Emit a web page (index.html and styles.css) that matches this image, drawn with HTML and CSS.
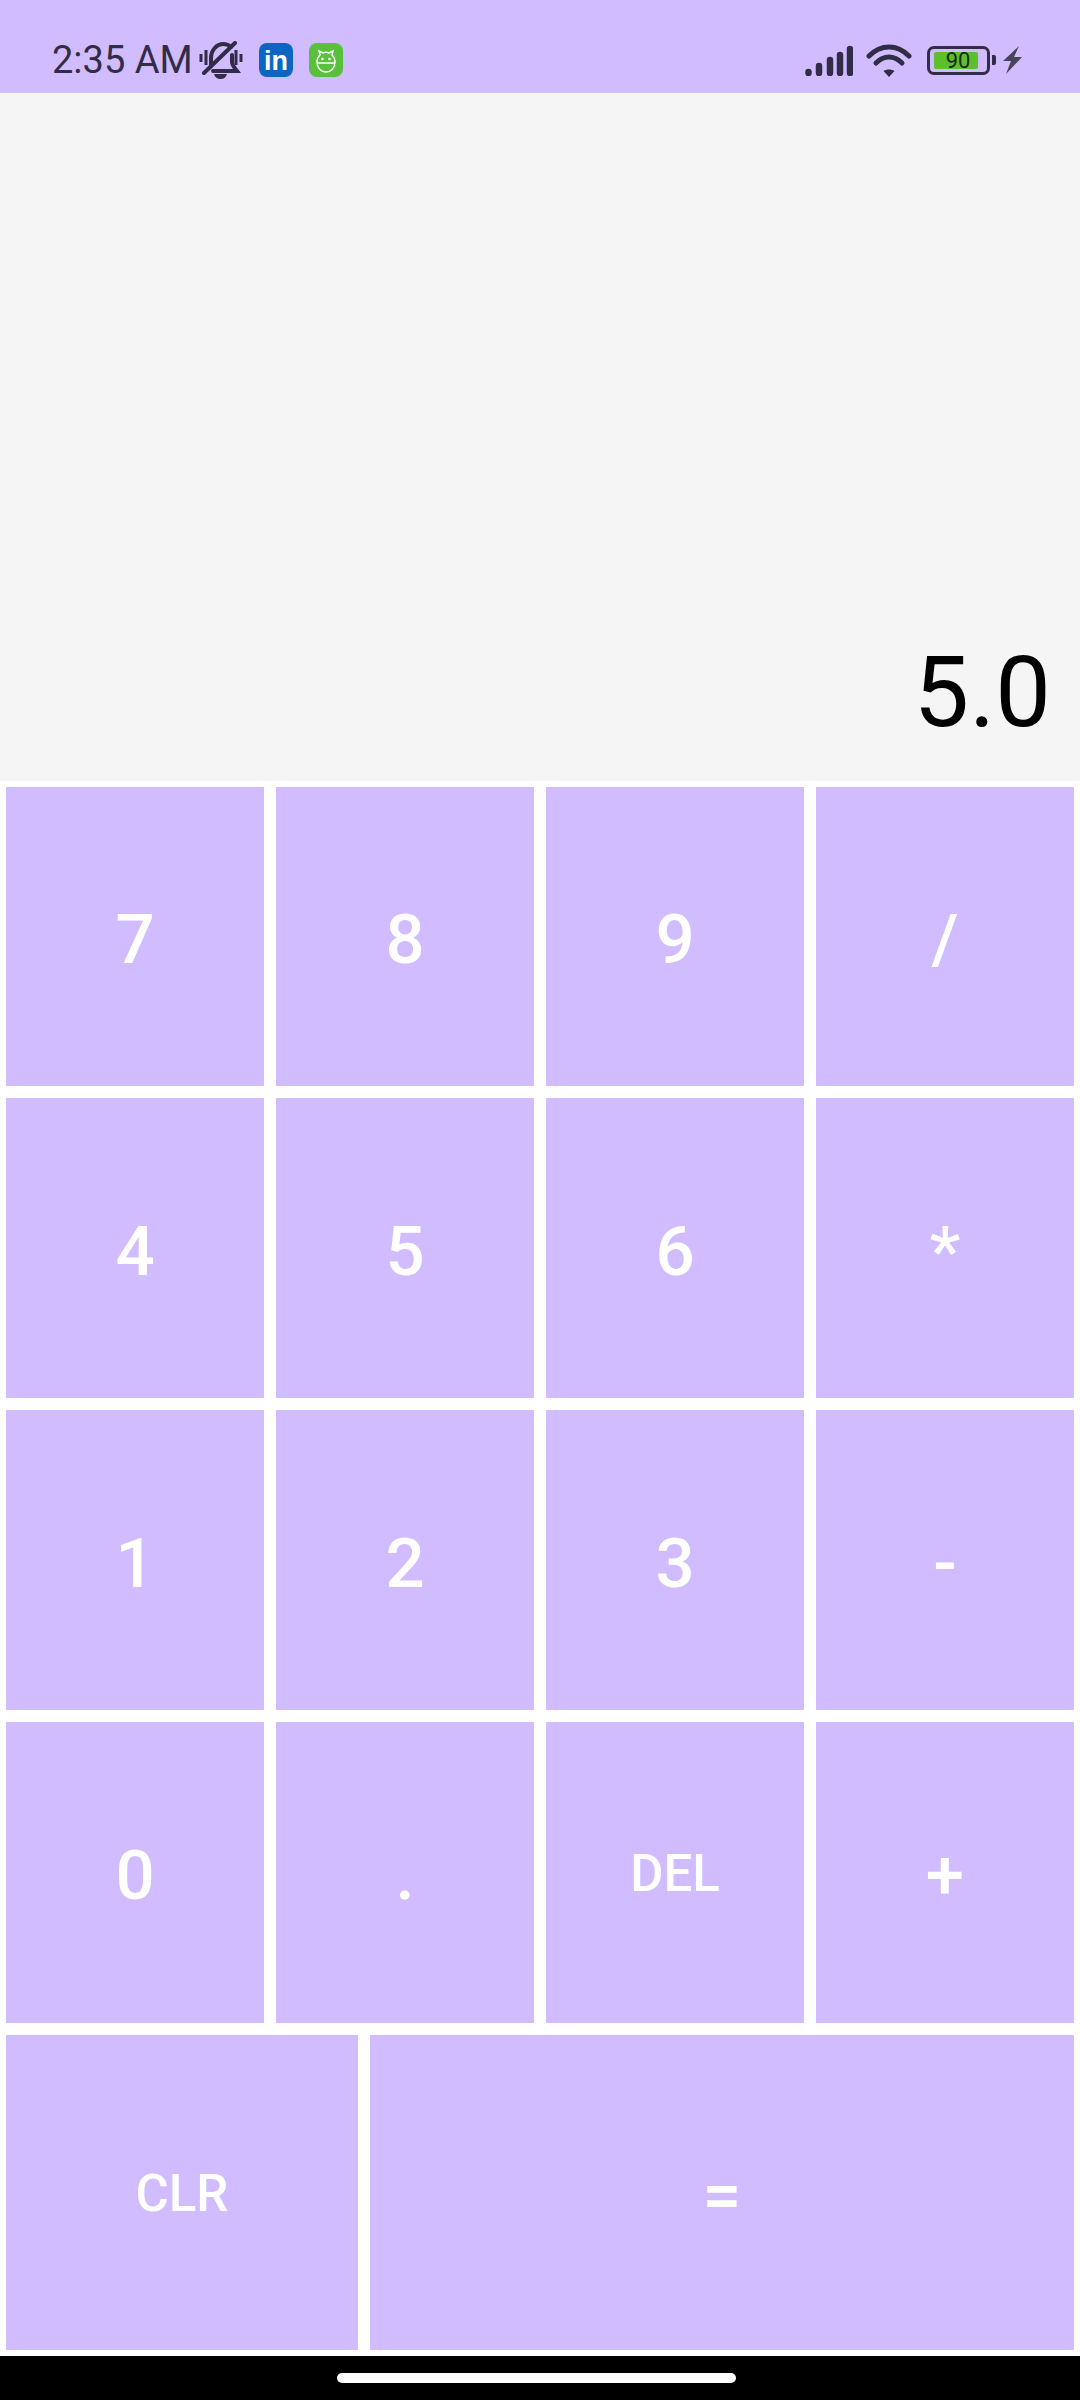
FILE: index.html
```html
<!DOCTYPE html>
<html lang="en">
<head>
    <meta charset="UTF-8">
    <meta name="viewport" content="width=device-width, initial-scale=1.0">
    <title>Calculator</title>
    <link rel="stylesheet" href="styles.css">
</head>
<body>
    <div class="app">
        <div class="status-bar">
            <div class="status-left">
                <span class="clock">2:35 AM</span>
                <svg class="icon-bell" viewBox="0 0 44 38">
                    <path d="M2 13v8M7 9v15M37 9v15M42 13v8" class="stroke-thin"/>
                    <path d="M12 25V17C12 9 18 3 24 3C27 3 30 4 32 6" class="stroke-dark"/>
                    <path d="M33 14V21C33 24 35 26 38 30H14" class="stroke-dark"/>
                    <path d="M5 32L36 2" class="stroke-dark"/>
                    <path d="M15 33H28C27 36.500 25 38 21.500 38C18 38 16 36.500 15 33Z" class="fill-dark"/>
                </svg>
                <svg class="icon-app icon-linkedin" viewBox="0 0 34 34">
                    <rect width="34" height="34" rx="8" fill="#0a66c2"/>
                    <text x="5" y="27" class="linkedin-text">in</text>
                </svg>
                <svg class="icon-app" viewBox="0 0 34 34">
                    <rect width="34" height="34" rx="8" fill="#58c03a"/>
                    <path d="M11 12L10 8L14 10C16 9 18 9 20 10L24 8L23 12C25 14 26 16 26 19C26 25 22 29 17 29C12 29 8 25 8 19C8 16 9 14 11 12Z" class="stroke-white"/>
                    <path d="M8 20H26" class="stroke-white"/>
                    <circle cx="13.500" cy="16" r="1.300" fill="#fff"/>
                    <circle cx="20.500" cy="16" r="1.300" fill="#fff"/>
                </svg>
            </div>
            <div class="status-right">
                <svg class="icon-signal" viewBox="0 0 48 31">
                    <path d="M3.500 27V28M14 21V28M25 15V28M35 10V28M45 4V28" class="stroke-signal"/>
                </svg>
                <svg class="icon-wifi" viewBox="0 0 46 34">
                    <path d="M3 13C15 1 31 1 43 13" class="stroke-wifi"/>
                    <path d="M10 20C18 12 28 12 36 20" class="stroke-wifi"/>
                    <path d="M17.500 28C20.500 26 25.500 26 28.500 28L23 34Z" class="fill-dark"/>
                </svg>
                <div class="battery">
                    <div class="battery-fill">90</div>
                </div>
                <div class="battery-nub"></div>
                <svg class="icon-bolt" viewBox="0 0 19 28">
                    <path d="M16 0L0 15H8L3 28L19 11H11Z" fill="#4a4458"/>
                </svg>
            </div>
        </div>

        <div class="display">5.0</div>

        <div class="keys">
            <div class="key-row">
                <button class="key">7</button>
                <button class="key">8</button>
                <button class="key">9</button>
                <button class="key">/</button>
            </div>
            <div class="key-row">
                <button class="key">4</button>
                <button class="key">5</button>
                <button class="key">6</button>
                <button class="key">*</button>
            </div>
            <div class="key-row">
                <button class="key">1</button>
                <button class="key">2</button>
                <button class="key">3</button>
                <button class="key">-</button>
            </div>
            <div class="key-row">
                <button class="key">0</button>
                <button class="key">.</button>
                <button class="key key-small">DEL</button>
                <button class="key">+</button>
            </div>
            <div class="key-row key-row-last">
                <button class="key key-small">CLR</button>
                <button class="key">=</button>
            </div>
        </div>

        <div class="nav-bar">
            <div class="home-pill"></div>
        </div>
    </div>
</body>
</html>
```

FILE: styles.css
```css
body {
    margin: 0;
    padding: 0;
    background-color: #ffffff;
    font-family: Roboto, sans-serif;
}

.app {
    width: 1080px;
    height: 2400px;
    display: flex;
    flex-direction: column;
}

/* status bar */
.status-bar {
    height: 66px;
    padding: 27px 0 0 52px;
    background-color: #d0bcff;
    display: flex;
    justify-content: space-between;
    align-items: center;
    color: #322c46;
}

.status-left,
.status-right {
    display: flex;
    align-items: center;
}

.status-right {
    padding-right: 58px;
}

.clock {
    font-size: 38px;
    width: 147px;
    letter-spacing: 0;
}

.icon-bell {
    width: 44px;
    height: 38px;
    margin-right: 16px;
}

.icon-app {
    width: 34px;
    height: 34px;
}

.icon-linkedin {
    margin-right: 16px;
}

.linkedin-text {
    font-family: "Liberation Sans", sans-serif;
    font-weight: 700;
    font-size: 27px;
    fill: #ffffff;
}

.icon-signal {
    width: 48px;
    height: 31px;
    margin-right: 13px;
}

.icon-wifi {
    width: 46px;
    height: 34px;
    margin-right: 15px;
}

.icon-bolt {
    width: 19px;
    height: 28px;
    margin-left: 7px;
}

.stroke-thin,
.stroke-dark,
.stroke-wifi,
.stroke-signal,
.stroke-white {
    fill: none;
}

.stroke-thin {
    stroke: #322c46;
    stroke-width: 3;
}

.stroke-dark {
    stroke: #322c46;
    stroke-width: 4;
    stroke-linecap: round;
}

.stroke-wifi {
    stroke: #322c46;
    stroke-width: 5;
    stroke-linecap: round;
}

.stroke-signal {
    stroke: #322c46;
    stroke-width: 6.500;
    stroke-linecap: round;
}

.stroke-white {
    stroke: #ffffff;
    stroke-width: 1.500;
}

.fill-dark {
    fill: #322c46;
}

.battery {
    box-sizing: border-box;
    width: 63px;
    height: 29px;
    padding: 3px 0 0 4px;
    border: 3px solid #322c46;
    border-radius: 7px;
}

.battery-fill {
    box-sizing: border-box;
    width: 44px;
    height: 17px;
    padding-left: 4px;
    background-color: #5cc02e;
    border-radius: 2px;
    color: #1d2a18;
    font-size: 22px;
    line-height: 17px;
    text-align: center;
}

.battery-nub {
    width: 4px;
    height: 10px;
    margin-left: 2px;
    background-color: #322c46;
    border-radius: 0 2px 2px 0;
}

/* result */
.display {
    box-sizing: border-box;
    height: 688px;
    padding: 0 29px 33px 0;
    background-color: #f5f5f5;
    color: #000000;
    font-size: 99px;
    line-height: 112px;
    display: flex;
    justify-content: flex-end;
    align-items: flex-end;
}

/* buttons */
.keys {
    height: 1563px;
    padding: 6px;
    display: flex;
    flex-direction: column;
    gap: 12px;
}

.key-row {
    height: 300px;
    display: grid;
    grid-template-columns: repeat(4, 1fr);
    gap: 12px;
}

.key-row:first-child {
    height: 299px;
}

.key-row:nth-child(4) {
    height: 301px;
}

.key-row-last {
    height: 315px;
    grid-template-columns: 1fr 2fr;
}

.key {
    margin: 0;
    padding: 6px 0 0;
    border: none;
    background-color: #d0bcff;
    color: #ffffff;
    font-family: Roboto, sans-serif;
    font-size: 69px;
    font-weight: 500;
}

.key-small {
    padding-top: 2px;
    font-size: 51px;
}

/* bottom */
.nav-bar {
    flex: 1;
    background-color: #000000;
    display: flex;
    justify-content: center;
    padding: 17px 7px 0 0;
    box-sizing: border-box;
}

.home-pill {
    width: 399px;
    height: 10px;
    border-radius: 5px;
    background-color: #ffffff;
}
```
